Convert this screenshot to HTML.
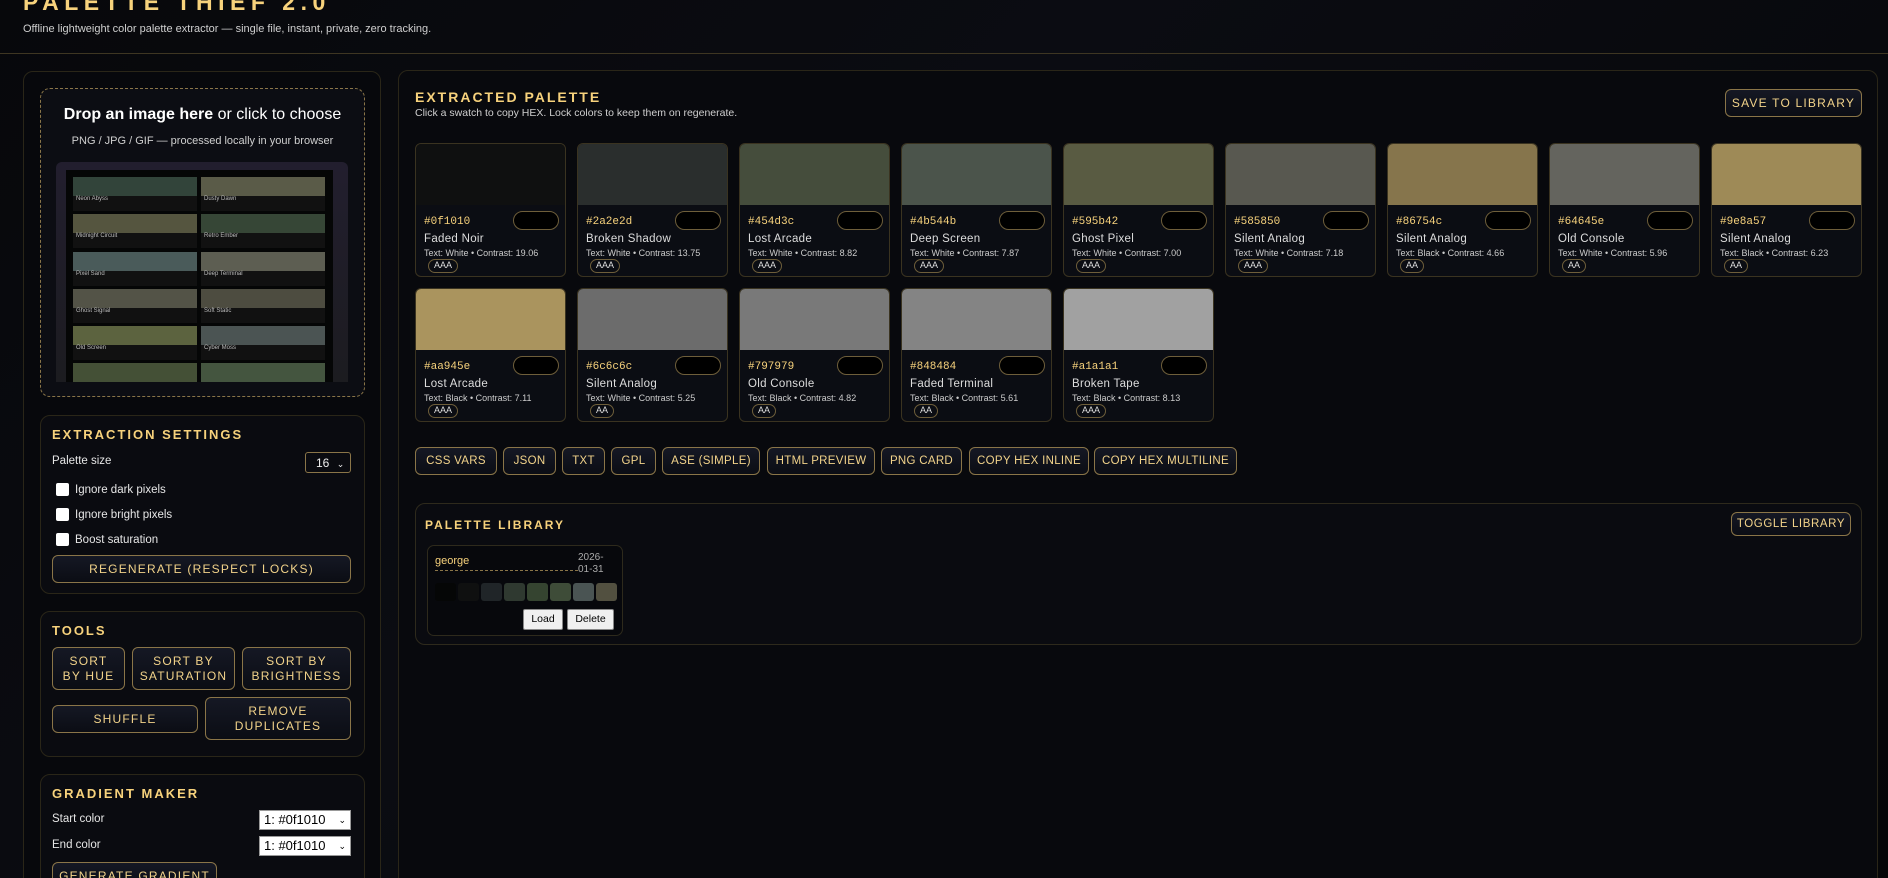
<!DOCTYPE html>
<html><head><meta charset="utf-8"><style>
*{box-sizing:border-box;margin:0;padding:0}
html,body{width:1888px;height:878px;overflow:hidden}
body{background:linear-gradient(135deg,#07080b,#0b0c12 40%,#050608);font-family:"Liberation Sans",sans-serif;color:#e6e6e6}
#w{position:relative;width:1888px;height:878px;overflow:hidden}
.a{position:absolute}
.gold{color:#f7d27c}
.h{font-weight:bold;letter-spacing:2px;color:#f7d27c;font-size:13px}
.panel{position:absolute;border:1px solid #2a2618;border-radius:10px;background:#0a0b10}
.btn{position:absolute;border:1.5px solid #8a7548;border-radius:6px;background:linear-gradient(#151824,#0b0d14);color:#f2d38a;font-size:12px;letter-spacing:1.2px;display:flex;align-items:center;justify-content:center;text-align:center;line-height:15px;white-space:nowrap}
.ex{letter-spacing:.3px;font-size:11.5px}
.card{position:absolute;width:151px;height:134px;border:1px solid #3a3320;border-radius:6px;background:#0b0d13;overflow:hidden}
.card .c{height:61px}
.card .hx{position:absolute;left:8px;top:72px;font-family:"Liberation Mono",monospace;font-size:11px;color:#f7d27c}
.card .lk{position:absolute;left:97px;top:67px;width:46px;height:19px;border:1.5px solid #6e5e3a;border-radius:10px;background:#000}
.card .nm{position:absolute;left:8px;top:89px;font-size:11.5px;color:#ddd;letter-spacing:.3px}
.card .ct{position:absolute;left:8px;top:104px;font-size:9px;color:#ccc}
.card .bd{position:absolute;left:12px;top:115px;height:14px;padding:0 5px;border:1.5px solid #6e5e3a;border-radius:8px;font-size:9px;color:#ddd;line-height:11px}
.tile{position:absolute;width:124px;height:34px;background:#111}
.tile i{display:block;height:19px}
.tile b{display:block;font-size:5px;color:#a08a4a;padding:2px 0 0 3px;font-weight:bold}
.tile s{display:block;font-size:6px;color:#bbb;padding-left:3px;text-decoration:none}
.sel{position:absolute;background:#fff;border:1px solid #999;color:#000;font-size:13px;padding-left:4px;line-height:18px}
.cb{position:absolute;left:56px;width:13px;height:13px;background:#fff;border-radius:2px}
.lbl{position:absolute;font-size:11.5px;color:#e6e6e6}
</style></head><body><div id="w">
<div class="a" style="left:23px;top:-11px;font-size:23px;font-weight:bold;letter-spacing:5.5px;color:#f7d27c">PALETTE THIEF 2.0</div>
<div class="a" style="left:23px;top:23px;font-size:11px;color:#cfcfcf">Offline lightweight color palette extractor — single file, instant, private, zero tracking.</div>
<div class="a" style="left:0;top:53px;width:1888px;height:1px;background:#3e3622"></div>

<div class="panel" style="left:23px;top:71px;width:358px;height:830px;background:#07080c"></div>
<div class="a" style="left:40px;top:88px;width:325px;height:309px;border:1.2px dashed #8a7548;border-radius:10px;background:#0c0d13"></div>
<div class="a" style="left:40px;top:106px;width:325px;text-align:center;font-size:16px;color:#fff"><b>Drop an image here</b> or click to choose</div>
<div class="a" style="left:40px;top:135px;width:325px;text-align:center;font-size:11px;color:#cfcfcf">PNG / JPG / GIF — processed locally in your browser</div>
<div class="a" style="left:56px;top:162px;width:292px;height:220px;border-radius:6px 6px 0 0;background:linear-gradient(#221e2e,#1c1c20)"></div>
<div class="a" style="left:66px;top:170px;width:267px;height:212px;background:#050606"></div>
<div class="tile" style="left:73px;top:177px"><i style="background:#32443a"></i><s>Neon Abyss</s></div>
<div class="tile" style="left:201px;top:177px"><i style="background:#5a5b48"></i><s>Dusty Dawn</s></div>
<div class="tile" style="left:73px;top:214px"><i style="background:#55553f"></i><s>Midnight Circuit</s></div>
<div class="tile" style="left:201px;top:214px"><i style="background:#364636"></i><s>Retro Ember</s></div>
<div class="tile" style="left:73px;top:252px"><i style="background:#4a5b5a"></i><s>Pixel Sand</s></div>
<div class="tile" style="left:201px;top:252px"><i style="background:#5d5e52"></i><s>Deep Terminal</s></div>
<div class="tile" style="left:73px;top:289px"><i style="background:#535347"></i><s>Ghost Signal</s></div>
<div class="tile" style="left:201px;top:289px"><i style="background:#4d4c40"></i><s>Soft Static</s></div>
<div class="tile" style="left:73px;top:326px"><i style="background:#5c633f"></i><s>Old Screen</s></div>
<div class="tile" style="left:201px;top:326px"><i style="background:#4b5453"></i><s>Cyber Moss</s></div>
<div class="tile" style="left:73px;top:363px;height:19px"><i style="background:#445036"></i></div>
<div class="tile" style="left:201px;top:363px;height:19px"><i style="background:#44553f"></i></div>

<div class="panel" style="left:40px;top:415px;width:325px;height:179px"></div>
<div class="a h" style="left:52px;top:427px">EXTRACTION SETTINGS</div>
<div class="lbl" style="left:52px;top:455px">Palette size</div>
<div class="a" style="left:305px;top:452px;width:46px;height:21px;border:1px solid #8a7548;border-radius:3px;font-size:12px;color:#eee;padding:3px 0 0 10px">16 <span style="font-size:9px;margin-left:4px">&#8964;</span></div>
<div class="cb" style="top:483px"></div><div class="lbl" style="left:75px;top:484px">Ignore dark pixels</div>
<div class="cb" style="top:508px"></div><div class="lbl" style="left:75px;top:509px">Ignore bright pixels</div>
<div class="cb" style="top:533px"></div><div class="lbl" style="left:75px;top:534px">Boost saturation</div>
<div class="btn" style="left:52px;top:555px;width:299px;height:28px">REGENERATE (RESPECT LOCKS)</div>

<div class="panel" style="left:40px;top:611px;width:325px;height:146px"></div>
<div class="a h" style="left:52px;top:623px">TOOLS</div>
<div class="btn" style="left:52px;top:647px;width:73px;height:43px">SORT<br>BY HUE</div>
<div class="btn" style="left:132px;top:647px;width:103px;height:43px">SORT BY<br>SATURATION</div>
<div class="btn" style="left:242px;top:647px;width:109px;height:43px">SORT BY<br>BRIGHTNESS</div>
<div class="btn" style="left:52px;top:705px;width:146px;height:28px">SHUFFLE</div>
<div class="btn" style="left:205px;top:697px;width:146px;height:43px">REMOVE<br>DUPLICATES</div>

<div class="panel" style="left:40px;top:774px;width:325px;height:130px"></div>
<div class="a h" style="left:52px;top:786px">GRADIENT MAKER</div>
<div class="lbl" style="left:52px;top:813px">Start color</div>
<div class="sel" style="left:259px;top:810px;width:92px;height:20px">1: #0f1010 <span style="font-size:9px;float:right;margin-right:4px">&#8964;</span></div>
<div class="lbl" style="left:52px;top:839px">End color</div>
<div class="sel" style="left:259px;top:836px;width:92px;height:20px">1: #0f1010 <span style="font-size:9px;float:right;margin-right:4px">&#8964;</span></div>
<div class="btn" style="left:52px;top:862px;width:165px;height:28px;align-items:flex-start;padding-top:6px">GENERATE GRADIENT</div>

<div class="panel" style="left:398px;top:70px;width:1480px;height:830px;background:#08090d"></div>
<div class="a h" style="left:415px;top:89px;font-size:14px">EXTRACTED PALETTE</div>
<div class="a" style="left:415px;top:107px;font-size:10.5px;color:#cfcfcf">Click a swatch to copy HEX. Lock colors to keep them on regenerate.</div>
<div class="btn" style="left:1725px;top:89px;width:137px;height:28px">SAVE TO LIBRARY</div>

<div class="card" style="left:415px;top:143px"><div class="c" style="background:#0f1010"></div><div class="hx">#0f1010</div><div class="lk"></div><div class="nm">Faded Noir</div><div class="ct">Text: White • Contrast: 19.06</div><div class="bd">AAA</div></div>
<div class="card" style="left:577px;top:143px"><div class="c" style="background:#2a2e2d"></div><div class="hx">#2a2e2d</div><div class="lk"></div><div class="nm">Broken Shadow</div><div class="ct">Text: White • Contrast: 13.75</div><div class="bd">AAA</div></div>
<div class="card" style="left:739px;top:143px"><div class="c" style="background:#454d3c"></div><div class="hx">#454d3c</div><div class="lk"></div><div class="nm">Lost Arcade</div><div class="ct">Text: White • Contrast: 8.82</div><div class="bd">AAA</div></div>
<div class="card" style="left:901px;top:143px"><div class="c" style="background:#4b544b"></div><div class="hx">#4b544b</div><div class="lk"></div><div class="nm">Deep Screen</div><div class="ct">Text: White • Contrast: 7.87</div><div class="bd">AAA</div></div>
<div class="card" style="left:1063px;top:143px"><div class="c" style="background:#595b42"></div><div class="hx">#595b42</div><div class="lk"></div><div class="nm">Ghost Pixel</div><div class="ct">Text: White • Contrast: 7.00</div><div class="bd">AAA</div></div>
<div class="card" style="left:1225px;top:143px"><div class="c" style="background:#585850"></div><div class="hx">#585850</div><div class="lk"></div><div class="nm">Silent Analog</div><div class="ct">Text: White • Contrast: 7.18</div><div class="bd">AAA</div></div>
<div class="card" style="left:1387px;top:143px"><div class="c" style="background:#86754c"></div><div class="hx">#86754c</div><div class="lk"></div><div class="nm">Silent Analog</div><div class="ct">Text: Black • Contrast: 4.66</div><div class="bd">AA</div></div>
<div class="card" style="left:1549px;top:143px"><div class="c" style="background:#64645e"></div><div class="hx">#64645e</div><div class="lk"></div><div class="nm">Old Console</div><div class="ct">Text: White • Contrast: 5.96</div><div class="bd">AA</div></div>
<div class="card" style="left:1711px;top:143px"><div class="c" style="background:#9e8a57"></div><div class="hx">#9e8a57</div><div class="lk"></div><div class="nm">Silent Analog</div><div class="ct">Text: Black • Contrast: 6.23</div><div class="bd">AA</div></div>

<div class="card" style="left:415px;top:288px"><div class="c" style="background:#aa945e"></div><div class="hx">#aa945e</div><div class="lk"></div><div class="nm">Lost Arcade</div><div class="ct">Text: Black • Contrast: 7.11</div><div class="bd">AAA</div></div>
<div class="card" style="left:577px;top:288px"><div class="c" style="background:#6c6c6c"></div><div class="hx">#6c6c6c</div><div class="lk"></div><div class="nm">Silent Analog</div><div class="ct">Text: White • Contrast: 5.25</div><div class="bd">AA</div></div>
<div class="card" style="left:739px;top:288px"><div class="c" style="background:#797979"></div><div class="hx">#797979</div><div class="lk"></div><div class="nm">Old Console</div><div class="ct">Text: Black • Contrast: 4.82</div><div class="bd">AA</div></div>
<div class="card" style="left:901px;top:288px"><div class="c" style="background:#848484"></div><div class="hx">#848484</div><div class="lk"></div><div class="nm">Faded Terminal</div><div class="ct">Text: Black • Contrast: 5.61</div><div class="bd">AA</div></div>
<div class="card" style="left:1063px;top:288px"><div class="c" style="background:#a1a1a1"></div><div class="hx">#a1a1a1</div><div class="lk"></div><div class="nm">Broken Tape</div><div class="ct">Text: Black • Contrast: 8.13</div><div class="bd">AAA</div></div>

<div class="btn ex" style="left:415px;top:447px;width:82px;height:28px">CSS VARS</div>
<div class="btn ex" style="left:503px;top:447px;width:53px;height:28px">JSON</div>
<div class="btn ex" style="left:562px;top:447px;width:43px;height:28px">TXT</div>
<div class="btn ex" style="left:611px;top:447px;width:45px;height:28px">GPL</div>
<div class="btn ex" style="left:662px;top:447px;width:98px;height:28px">ASE (SIMPLE)</div>
<div class="btn ex" style="left:767px;top:447px;width:108px;height:28px">HTML PREVIEW</div>
<div class="btn ex" style="left:881px;top:447px;width:81px;height:28px">PNG CARD</div>
<div class="btn ex" style="left:969px;top:447px;width:120px;height:28px">COPY HEX INLINE</div>
<div class="btn ex" style="left:1094px;top:447px;width:143px;height:28px">COPY HEX MULTILINE</div>

<div class="panel" style="left:415px;top:503px;width:1447px;height:142px;border-color:#2e2a1c"></div>
<div class="a h" style="left:425px;top:518px;font-size:12px">PALETTE LIBRARY</div>
<div class="btn" style="left:1731px;top:512px;width:120px;height:24px;font-size:11.5px;letter-spacing:.6px">TOGGLE LIBRARY</div>
<div class="a" style="left:427px;top:545px;width:196px;height:91px;border:1px solid #2e2a1c;border-radius:7px;background:#07080c"></div>
<div class="a gold" style="left:435px;top:555px;font-size:11px">george</div>
<div class="a" style="left:435px;top:570px;width:143px;border-top:1px dashed #8a7548"></div>
<div class="a" style="left:578px;top:552px;font-size:10px;color:#aaa;line-height:12px">2026-<br>01-31</div>
<div class="a" style="left:435px;top:583px;display:flex;gap:2px">
<i style="display:block;width:21px;height:18px;border-radius:3px;background:#050606"></i>
<i style="display:block;width:21px;height:18px;border-radius:3px;background:#0f1010"></i>
<i style="display:block;width:21px;height:18px;border-radius:3px;background:#202528"></i>
<i style="display:block;width:21px;height:18px;border-radius:3px;background:#2f3930"></i>
<i style="display:block;width:21px;height:18px;border-radius:3px;background:#354430"></i>
<i style="display:block;width:21px;height:18px;border-radius:3px;background:#3e4c38"></i>
<i style="display:block;width:21px;height:18px;border-radius:3px;background:#4a5453"></i>
<i style="display:block;width:21px;height:18px;border-radius:3px;background:#525040"></i>
</div>
<div class="a" style="left:523px;top:609px;width:40px;height:21px;background:#f0f0f0;border:1px solid #888;border-radius:2px;font-size:10.5px;color:#000;text-align:center;line-height:19px">Load</div>
<div class="a" style="left:567px;top:609px;width:47px;height:21px;background:#f0f0f0;border:1px solid #888;border-radius:2px;font-size:10.5px;color:#000;text-align:center;line-height:19px">Delete</div>
</div></body></html>
